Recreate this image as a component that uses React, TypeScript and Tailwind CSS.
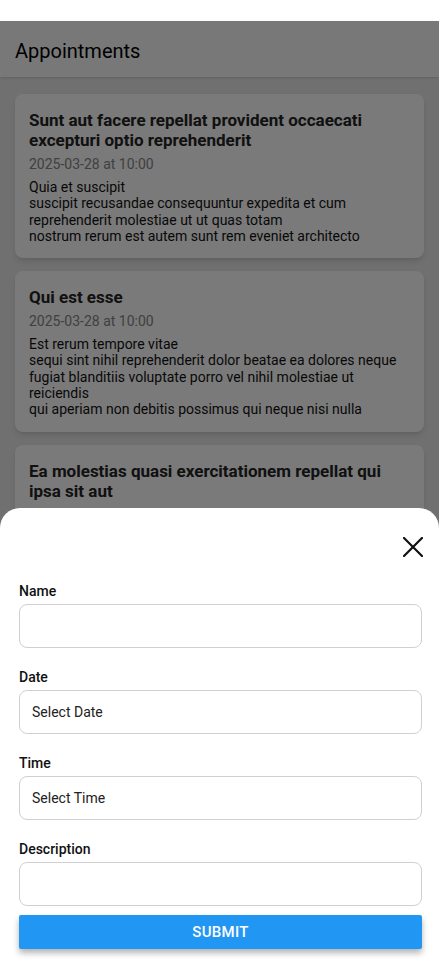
import React from "react";

interface PostIF {
  title: string;
  date: string;
  body: string;
}

const posts: PostIF[] = [
  {
    title: "Sunt aut facere repellat provident occaecati excepturi optio reprehenderit",
    date: "2025-03-28 at 10:00",
    body: "Quia et suscipit\nsuscipit recusandae consequuntur expedita et cum\nreprehenderit molestiae ut ut quas totam\nnostrum rerum est autem sunt rem eveniet architecto",
  },
  {
    title: "Qui est esse",
    date: "2025-03-28 at 10:00",
    body: "Est rerum tempore vitae\nsequi sint nihil reprehenderit dolor beatae ea dolores neque\nfugiat blanditiis voluptate porro vel nihil molestiae ut reiciendis\nqui aperiam non debitis possimus qui neque nisi nulla",
  },
  {
    title: "Ea molestias quasi exercitationem repellat qui ipsa sit aut",
    date: "2025-03-28 at 10:00",
    body: "Et iusto sed quo iure\nvoluptatem occaecati omnis eligendi aut ad\nvoluptatem doloribus vel accusantium quis pariatur\nmolestiae porro eius odio et labore et velit aut",
  },
];

const Field = ({ label, placeholder }: { label: string; placeholder?: string }) => (
  <div className="flex flex-col">
    <span className="text-[14px] leading-[17px] font-medium text-[#111]">{label}</span>
    <div className="mt-[4px] h-[44px] w-full rounded-[8px] border border-[#d0d0d0] bg-white flex items-center px-[12px] text-[14px] text-[#222]">
      {placeholder}
    </div>
  </div>
);

const App = () => {
  return (
    <div className="w-[439px] h-[969px] overflow-hidden bg-white" style={{ fontFamily: "Roboto, 'Noto Sans', sans-serif" }}>
      {/* status bar */}
      <div className="h-[21px] bg-white" />

      <div className="relative h-[948px] bg-[#e0e0e0]">
        {/* screen behind the sheet */}
        <div className="h-[56px] bg-[#f0f0f0] shadow-sm flex items-center px-[15px] pt-[3px]">
          <h1 className="text-[20px] text-[#000]">Appointments</h1>
        </div>
        <div className="flex flex-col gap-[13px] px-[15px] pt-[17px]">
          {posts.map((post, index) => (
            <div key={index} className="rounded-[8px] bg-[#f4f4f4] shadow-md px-[14px] pt-[16px] pb-[14px]">
              <h2 className="text-[17px] leading-[20px] font-bold text-[#222]">{post.title}</h2>
              <p className="mt-[6px] text-[14px] leading-[17px] text-[#808080]">{post.date}</p>
              <p className="mt-[6px] text-[14px] leading-[16.3px] text-[#111] whitespace-pre-line">{post.body}</p>
            </div>
          ))}
        </div>

        {/* dim overlay */}
        <div className="absolute inset-0 bg-black/50" />

        {/* bottom sheet */}
        <div className="absolute left-0 right-0 bottom-0 h-[461px] bg-white rounded-t-[20px] pl-[19px] pr-[17px] pt-[29px]">
          <div className="flex justify-end">
            <svg width="20" height="20" viewBox="0 0 20 20" className="mr-[-1px]">
              <path d="M1 1 L19 19 M19 1 L1 19" stroke="#111" strokeWidth="2.2" strokeLinecap="square" />
            </svg>
          </div>
          <div className="mt-[26px] flex flex-col gap-[21px]">
            <Field label="Name" />
            <Field label="Date" placeholder="Select Date" />
            <Field label="Time" placeholder="Select Time" />
            <Field label="Description" />
          </div>
          <button className="mt-[9px] w-full h-[34px] bg-[#2196f3] text-white text-[15px] font-medium tracking-[0.3px] rounded-[2px] shadow-[0_4px_6px_rgba(0,0,0,0.3)]">
            SUBMIT
          </button>
        </div>
      </div>
    </div>
  );
};

export default App;
